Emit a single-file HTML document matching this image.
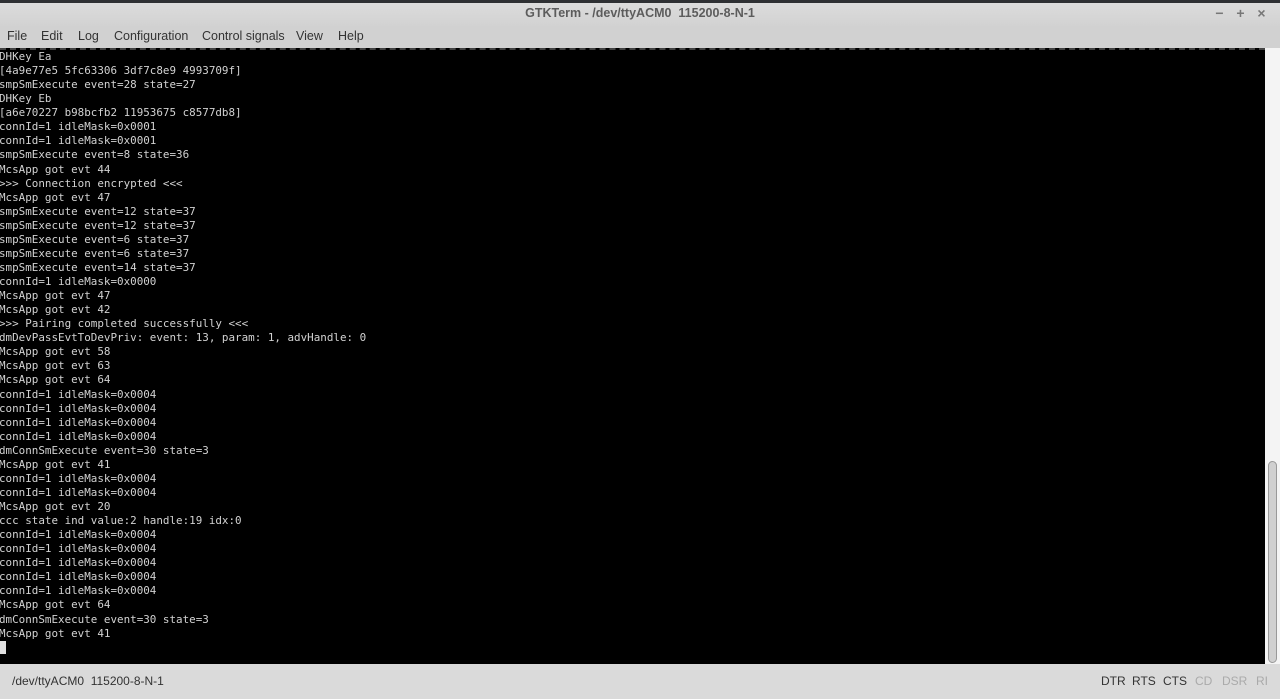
<!DOCTYPE html>
<html><head><meta charset="utf-8"><style>
*{margin:0;padding:0;box-sizing:border-box}
html,body{width:1280px;height:699px;overflow:hidden;background:#d4d4d4;font-family:"Liberation Sans",sans-serif}
#top{position:absolute;left:0;top:0;width:1280px;height:3px;background:#2e3033}
#title{position:absolute;left:0;top:3px;width:1280px;height:23px;background:linear-gradient(#dcdcdc,#d2d2d2);text-align:center;font-size:12.5px;font-weight:bold;color:#5c5c5c;line-height:21px}
#title .btns{position:absolute;right:8px;top:0;font-weight:bold;color:#777;font-size:14px;letter-spacing:0}
#title .btns span{display:inline-block;width:21px;text-align:center}
#menu{position:absolute;left:0;top:26px;width:1280px;height:22px;background:#d1d1d1;font-size:12.5px;color:#333;line-height:20px}
#menu span{position:absolute;top:0}
#term{position:absolute;left:0;top:48px;width:1265px;height:616px;background:#000;border-top:2px dashed #444}
#term pre{position:absolute;left:-1px;top:0px;font-family:"DejaVu Sans Mono",monospace;font-size:10.9px;line-height:14.07px;color:#d2d2d2}
#cur{position:absolute;left:0;top:591px;width:6px;height:13px;background:#e0e0e0}
#sb{position:absolute;left:1265px;top:48px;width:15px;height:616px;background:#f4f4f4}
#thumb{position:absolute;left:1268px;top:461px;width:9px;height:202px;border:1px solid #999;border-radius:5px;background:#d0d0d0}
#status{position:absolute;left:0;top:664px;width:1280px;height:35px;background:#dadada;font-size:12px;color:#333;line-height:35px}
#status span{position:absolute;top:0}
.dim{color:#aaa}
</style></head><body>
<div id="top"></div>
<div id="title">GTKTerm - /dev/ttyACM0&nbsp; 115200-8-N-1<div class="btns"><span>−</span><span>+</span><span>×</span></div></div>
<div id="menu"><span style="left:7px">File</span><span style="left:41px">Edit</span><span style="left:78px">Log</span><span style="left:114px">Configuration</span><span style="left:202px">Control signals</span><span style="left:296px">View</span><span style="left:338px">Help</span></div>
<div id="term"><pre>DHKey Ea
[4a9e77e5 5fc63306 3df7c8e9 4993709f]
smpSmExecute event=28 state=27
DHKey Eb
[a6e70227 b98bcfb2 11953675 c8577db8]
connId=1 idleMask=0x0001
connId=1 idleMask=0x0001
smpSmExecute event=8 state=36
McsApp got evt 44
&gt;&gt;&gt; Connection encrypted &lt;&lt;&lt;
McsApp got evt 47
smpSmExecute event=12 state=37
smpSmExecute event=12 state=37
smpSmExecute event=6 state=37
smpSmExecute event=6 state=37
smpSmExecute event=14 state=37
connId=1 idleMask=0x0000
McsApp got evt 47
McsApp got evt 42
&gt;&gt;&gt; Pairing completed successfully &lt;&lt;&lt;
dmDevPassEvtToDevPriv: event: 13, param: 1, advHandle: 0
McsApp got evt 58
McsApp got evt 63
McsApp got evt 64
connId=1 idleMask=0x0004
connId=1 idleMask=0x0004
connId=1 idleMask=0x0004
connId=1 idleMask=0x0004
dmConnSmExecute event=30 state=3
McsApp got evt 41
connId=1 idleMask=0x0004
connId=1 idleMask=0x0004
McsApp got evt 20
ccc state ind value:2 handle:19 idx:0
connId=1 idleMask=0x0004
connId=1 idleMask=0x0004
connId=1 idleMask=0x0004
connId=1 idleMask=0x0004
connId=1 idleMask=0x0004
McsApp got evt 64
dmConnSmExecute event=30 state=3
McsApp got evt 41</pre><div id="cur"></div></div>
<div id="sb"></div><div id="thumb"></div>
<div id="status"><span style="left:12px">/dev/ttyACM0&nbsp; 115200-8-N-1</span><span style="left:1101px">DTR</span><span style="left:1132px">RTS</span><span style="left:1163px">CTS</span><span class="dim" style="left:1195px">CD</span><span class="dim" style="left:1222px">DSR</span><span class="dim" style="left:1256px">RI</span></div>
</body></html>
